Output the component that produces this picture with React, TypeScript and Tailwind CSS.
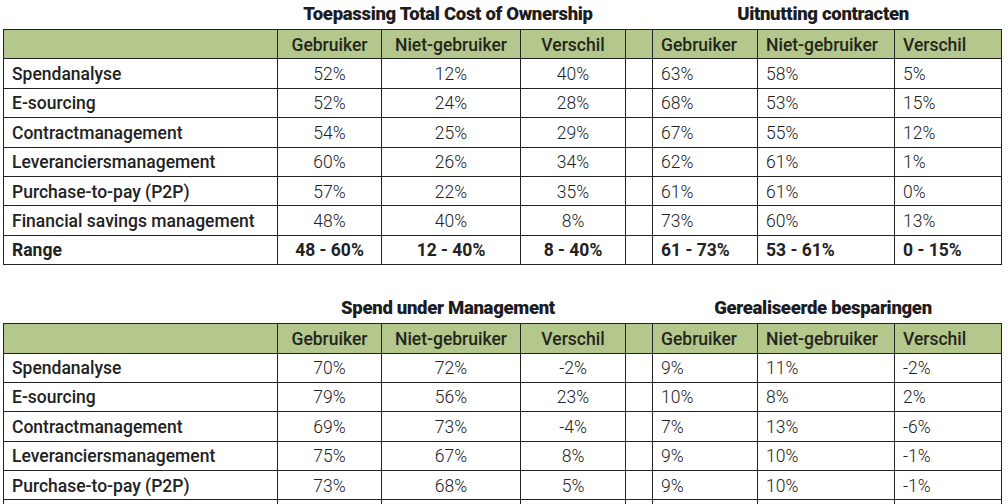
const tco = {
  title: 'Toepassing Total Cost of Ownership',
  rows: [
    ['Spendanalyse', '52%', '12%', '40%'],
    ['E-sourcing', '52%', '24%', '28%'],
    ['Contractmanagement', '54%', '25%', '29%'],
    ['Leveranciersmanagement', '60%', '26%', '34%'],
    ['Purchase-to-pay (P2P)', '57%', '22%', '35%'],
    ['Financial savings management', '48%', '40%', '8%'],
  ],
};

const table1Right = [
  ['63%', '58%', '5%'],
  ['68%', '53%', '15%'],
  ['67%', '55%', '12%'],
  ['62%', '61%', '1%'],
  ['61%', '61%', '0%'],
  ['73%', '60%', '13%'],
];

const table2Left = [
  ['Spendanalyse', '70%', '72%', '-2%'],
  ['E-sourcing', '79%', '56%', '23%'],
  ['Contractmanagement', '69%', '73%', '-4%'],
  ['Leveranciersmanagement', '75%', '67%', '8%'],
  ['Purchase-to-pay (P2P)', '73%', '68%', '5%'],
  ['', '', '', ''],
];

const table2Right = [
  ['9%', '11%', '-2%'],
  ['10%', '8%', '2%'],
  ['7%', '13%', '-6%'],
  ['9%', '10%', '-1%'],
  ['9%', '10%', '-1%'],
  ['', '', ''],
];

const cell = 'border border-[#222] h-[29.4px] p-0 pt-[1px]';

function Titles({ left, right }: { left: string; right: string }) {
  return (
    <div className="flex h-[29px] items-center font-['Roboto',sans-serif] text-[18.5px] font-black tracking-[-0.3px] text-[#1c1c22]">
      <div className="w-[274px]" />
      <div className="w-[348px] text-center">{left}</div>
      <div className="w-[27px]" />
      <div className="w-[348px] text-center">{right}</div>
    </div>
  );
}

function DataTable({
  left,
  right,
  range,
}: {
  left: string[][];
  right: string[][];
  range?: { left: string[]; right: string[] };
}) {
  return (
    <table className="ml-[3px] w-[998px] table-fixed border-collapse font-['Roboto',sans-serif] text-[17.5px] text-[#222]">
      <colgroup>
        <col className="w-[274px]" />
        <col className="w-[104px]" />
        <col className="w-[139px]" />
        <col className="w-[105px]" />
        <col className="w-[27px]" />
        <col className="w-[105px]" />
        <col className="w-[137px]" />
        <col className="w-[107px]" />
      </colgroup>
      <thead>
        <tr className="bg-[#b4c78c] font-medium text-[#24261c]">
          <th className={cell} />
          <th className={`${cell} text-center font-medium`}>Gebruiker</th>
          <th className={`${cell} text-center font-medium`}>Niet-gebruiker</th>
          <th className={`${cell} text-center font-medium`}>Verschil</th>
          <th className={cell} />
          <th className={`${cell} pl-2 text-left font-medium`}>Gebruiker</th>
          <th className={`${cell} pl-2 text-left font-medium`}>Niet-gebruiker</th>
          <th className={`${cell} pl-2 text-left font-medium`}>Verschil</th>
        </tr>
      </thead>
      <tbody>
        {left.map((r, i) => (
          <tr key={i}>
            <td className={`${cell} pl-2 font-medium`}>{r[0]}</td>
            <td className={`${cell} text-center font-light`}>{r[1]}</td>
            <td className={`${cell} text-center font-light`}>{r[2]}</td>
            <td className={`${cell} text-center font-light`}>{r[3]}</td>
            <td className={cell} />
            <td className={`${cell} pl-2 font-light`}>{right[i][0]}</td>
            <td className={`${cell} pl-2 font-light`}>{right[i][1]}</td>
            <td className={`${cell} pl-2 font-light`}>{right[i][2]}</td>
          </tr>
        ))}
        {range && (
          <tr className="font-bold">
            <td className={`${cell} pl-2`}>Range</td>
            {range.left.map((v, i) => (
              <td key={i} className={`${cell} text-center`}>{v}</td>
            ))}
            <td className={cell} />
            {range.right.map((v, i) => (
              <td key={i} className={`${cell} pl-2`}>{v}</td>
            ))}
          </tr>
        )}
      </tbody>
    </table>
  );
}

export default function App() {
  return (
    <div className="h-[504px] w-[1008px] overflow-hidden bg-white">
      <Titles left={tco.title} right="Uitnutting contracten" />
      <DataTable
        left={tco.rows}
        right={table1Right}
        range={{ left: ['48 - 60%', '12 - 40%', '8 - 40%'], right: ['61 - 73%', '53 - 61%', '0 - 15%'] }}
      />
      <div className="h-[29px]" />
      <Titles left="Spend under Management" right="Gerealiseerde besparingen" />
      <DataTable left={table2Left} right={table2Right} />
    </div>
  );
}
